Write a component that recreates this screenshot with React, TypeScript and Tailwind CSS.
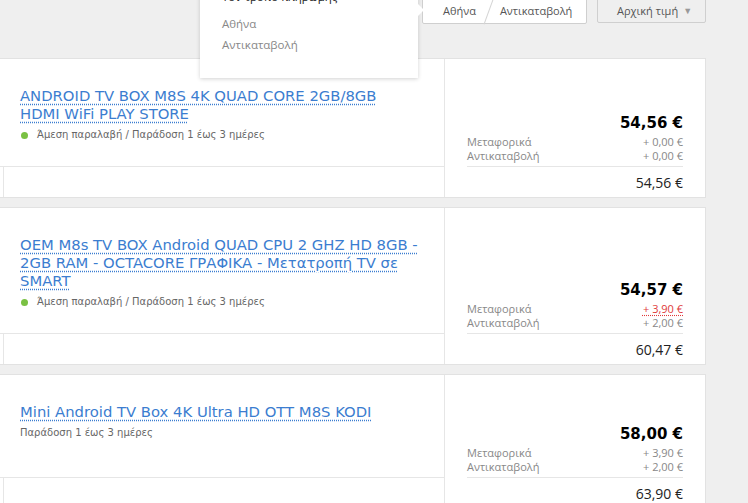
import React from 'react';

type Fee = { label: string; value: string; warn?: boolean };

type Product = {
    title: string[];
    delivery: string;
    inStock: boolean;
    price: string;
    fees: Fee[];
    total: string;
};

const products: Product[] = [
    {
        title: ['ANDROID TV BOX M8S 4K QUAD CORE 2GB/8GB', 'HDMI WiFi PLAY STORE'],
        delivery: 'Άμεση παραλαβή / Παράδοση 1 έως 3 ημέρες',
        inStock: true,
        price: '54,56 €',
        fees: [
            { label: 'Μεταφορικά', value: '+ 0,00 €' },
            { label: 'Αντικαταβολή', value: '+ 0,00 €' },
        ],
        total: '54,56 €',
    },
    {
        title: ['OEM M8s TV BOX Android QUAD CPU 2 GHZ HD 8GB -', '2GB RAM - OCTACORE ΓΡΑΦΙΚΑ - Μετατροπή TV σε', 'SMART'],
        delivery: 'Άμεση παραλαβή / Παράδοση 1 έως 3 ημέρες',
        inStock: true,
        price: '54,57 €',
        fees: [
            { label: 'Μεταφορικά', value: '+ 3,90 €', warn: true },
            { label: 'Αντικαταβολή', value: '+ 2,00 €' },
        ],
        total: '60,47 €',
    },
    {
        title: ['Mini Android TV Box 4K Ultra HD OTT M8S KODI'],
        delivery: 'Παράδοση 1 έως 3 ημέρες',
        inStock: false,
        price: '58,00 €',
        fees: [
            { label: 'Μεταφορικά', value: '+ 3,90 €' },
            { label: 'Αντικαταβολή', value: '+ 2,00 €' },
        ],
        total: '63,90 €',
    },
];

const round = { fontFamily: '"Open Sans", "Noto Sans", sans-serif' };
const verdana = { fontFamily: '"DejaVu Sans", Verdana, sans-serif' };

function ProductCard({ p }: { p: Product }) {
    return (
        <div className="grid w-[706px] grid-cols-[445px_1fr] border-y border-r border-[#e2e2e2] bg-white">
            {/* top row */}
            <div className="min-h-[102px] border-r border-[#e6e6e6] pt-[28px] pb-[24px] pl-[20px]" style={verdana}>
                <div className="text-[14.8px] leading-[18px]">
                    <a className="text-[#3b7dd0] underline decoration-dotted decoration-[#3b7dd0] underline-offset-[3px]">
                        {p.title.map((line, i) => (
                            <React.Fragment key={i}>
                                {line}
                                {i < p.title.length - 1 && <br />}
                            </React.Fragment>
                        ))}
                    </a>
                </div>
                <div className="mt-[5px] flex items-center text-[10px] leading-[14px] text-[#666]">
                    {p.inStock && <span className="mr-[9px] ml-[1px] inline-block h-[7px] w-[7px] rounded-full bg-[#7ac143]" />}
                    {p.delivery}
                </div>
            </div>
            <div className="flex flex-col justify-end px-[22px] pb-[3px]" style={round}>
                <div className="mb-[2px] text-right text-[15px] leading-[20px] font-bold text-black" style={verdana}>
                    {p.price}
                </div>
                {p.fees.map((f) => (
                    <div key={f.label} className="flex justify-between text-[11px] leading-[14px] text-[#888]">
                        <span>{f.label}</span>
                        <span className={f.warn ? 'text-[#e03a3a] underline decoration-dotted decoration-[#e03a3a] underline-offset-2' : ''}>
                            {f.value}
                        </span>
                    </div>
                ))}
            </div>
            {/* bottom row */}
            <div className="flex h-[31px] border-t border-r border-[#e6e6e6]">
                <div className="w-[4px] border-r border-[#e6e6e6]" />
            </div>
            <div className="px-[22px]" style={round}>
                <div className="flex h-[31px] items-center justify-end border-t border-[#e6e6e6] text-[14px] text-[#222]">
                    {p.total}
                </div>
            </div>
        </div>
    );
}

export default function App() {
    return (
        <div className="relative h-[503px] w-[748px] overflow-hidden bg-[#efefef]">
            {/* header controls */}
            <div className="flex h-[58px] items-start justify-end gap-[10px] pr-[42px]" style={round}>
                <div className="-mt-px flex h-[25px] w-[165px] items-center rounded-b-[2px] border border-[#cfcfcf] bg-white text-[11px] text-[#555]">
                    <span className="pl-[20px]">Αθήνα</span>
                    <span className="mr-[11px] ml-[12px] h-[26px] w-px rotate-[20deg] bg-[#d5d5d5]" />
                    <span>Αντικαταβολή</span>
                </div>
                <div className="-mt-px flex h-[24px] w-[109px] items-center rounded-b-[2px] border border-[#cfcfcf] bg-[#efefef] pl-[19px] text-[11px] text-[#555]">
                    Αρχική τιμή
                    <span className="ml-[5px] text-[9px] text-[#999]">▼</span>
                </div>
            </div>

            <div className="flex flex-col gap-[9px]">
                {products.map((p, i) => (
                    <ProductCard key={i} p={p} />
                ))}
            </div>

            {/* payment method popup */}
            <div
                className="absolute top-[-22px] left-[200px] h-[100px] w-[218px] bg-white pt-[8px] pl-[22px] shadow-[0_1px_4px_rgba(0,0,0,0.18)]"
                style={round}
            >
                <div className="mb-[6px] text-[11.5px] leading-[21px] text-[#222]">Τον τρόπο πληρωμής</div>
                <div className="text-[11.5px] leading-[21px] text-[#888]">Αθήνα</div>
                <div className="text-[11.5px] leading-[21px] text-[#888]">Αντικαταβολή</div>
                <span className="absolute top-[26px] right-[-6px] h-0 w-0 border-y-[6px] border-l-[6px] border-y-transparent border-l-white" />
            </div>
        </div>
    );
}
